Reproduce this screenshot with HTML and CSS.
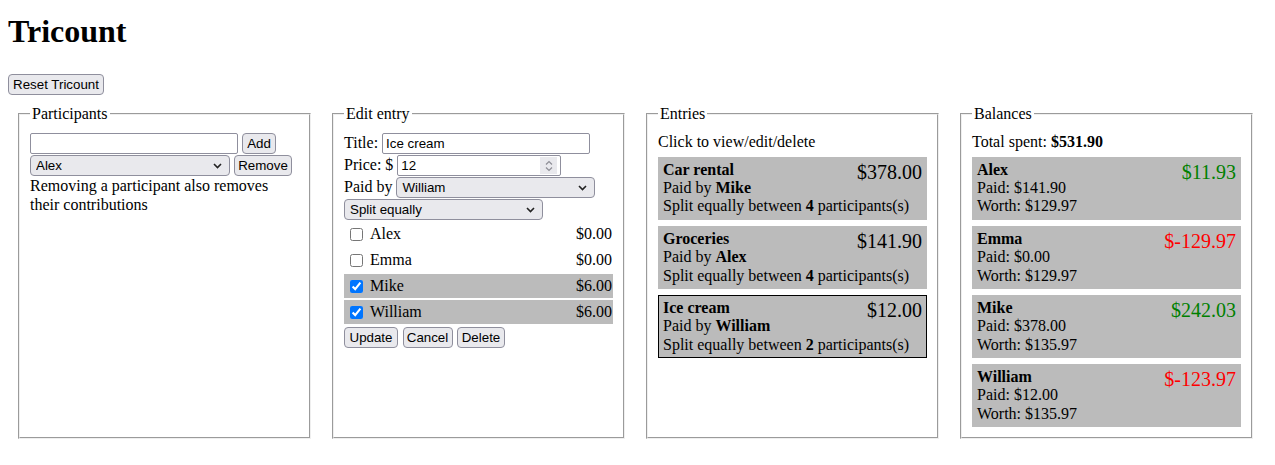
FILE: index.html
```html
<!DOCTYPE html>
<html lang="en">
<head>
<meta charset="utf-8">
<title>Tricount</title>
<link rel="stylesheet" href="styles.css">
</head>
<body>
<h1 class="title">Tricount</h1>
<div class="toolbar"><button class="btn btn-reset">Reset Tricount</button></div>
<div class="panels">
  <fieldset class="panel">
    <legend>Participants</legend>
    <div class="row">
      <input class="ctrl field name-input" type="text">
      <button class="btn btn-add">Add</button>
    </div>
    <div class="row">
      <select class="ctrl dropdown participant-select"><option>Alex</option><option>Emma</option><option>Mike</option><option>William</option></select>
      <button class="btn btn-remove">Remove</button>
    </div>
    <p class="note">Removing a participant also removes their contributions</p>
  </fieldset>

  <fieldset class="panel">
    <legend>Edit entry</legend>
    <div class="row">
      <span>Title:</span>
      <input class="ctrl field title-input" type="text" value="Ice cream">
    </div>
    <div class="row">
      <span>Price: $</span>
      <span class="num-wrap">
        <input class="ctrl field price-input" type="number" value="12">
        <span class="spinner" aria-hidden="true">
          <svg width="10" height="14" viewBox="0 0 10 14"><path d="M2 5.5 L5 2.5 L8 5.5" fill="none" stroke="#8e8e96" stroke-width="1.2"/><path d="M2 8.5 L5 11.5 L8 8.5" fill="none" stroke="#8e8e96" stroke-width="1.2"/></svg>
        </span>
      </span>
    </div>
    <div class="row">
      <span>Paid by</span>
      <select class="ctrl dropdown payer-select"><option>Alex</option><option>Emma</option><option>Mike</option><option selected>William</option></select>
    </div>
    <div class="row">
      <select class="ctrl dropdown split-select"><option>Split equally</option></select>
    </div>
    <div class="shares">
      <label class="share"><input type="checkbox" class="chk"><span class="share-name">Alex</span><span class="share-amt">$0.00</span></label>
      <label class="share"><input type="checkbox" class="chk"><span class="share-name">Emma</span><span class="share-amt">$0.00</span></label>
      <label class="share share-on"><input type="checkbox" class="chk" checked><span class="share-name">Mike</span><span class="share-amt">$6.00</span></label>
      <label class="share share-on"><input type="checkbox" class="chk" checked><span class="share-name">William</span><span class="share-amt">$6.00</span></label>
    </div>
    <div class="actions">
      <button class="btn btn-update">Update</button>
      <button class="btn btn-cancel">Cancel</button>
      <button class="btn btn-delete">Delete</button>
    </div>
  </fieldset>

  <fieldset class="panel">
    <legend>Entries</legend>
    <p class="lead">Click to view/edit/delete</p>
    <div class="card">
      <span class="amount">$378.00</span>
      <b>Car rental</b><br>
      Paid by <b>Mike</b><br>
      Split equally between <b>4</b> participants(s)
    </div>
    <div class="card">
      <span class="amount">$141.90</span>
      <b>Groceries</b><br>
      Paid by <b>Alex</b><br>
      Split equally between <b>4</b> participants(s)
    </div>
    <div class="card card-selected">
      <span class="amount">$12.00</span>
      <b>Ice cream</b><br>
      Paid by <b>William</b><br>
      Split equally between <b>2</b> participants(s)
    </div>
  </fieldset>

  <fieldset class="panel">
    <legend>Balances</legend>
    <p class="lead">Total spent: <b>$531.90</b></p>
    <div class="card">
      <span class="amount pos">$11.93</span>
      <b>Alex</b><br>
      Paid: $141.90<br>
      Worth: $129.97
    </div>
    <div class="card">
      <span class="amount neg">$-129.97</span>
      <b>Emma</b><br>
      Paid: $0.00<br>
      Worth: $129.97
    </div>
    <div class="card">
      <span class="amount pos">$242.03</span>
      <b>Mike</b><br>
      Paid: $378.00<br>
      Worth: $135.97
    </div>
    <div class="card">
      <span class="amount neg">$-123.97</span>
      <b>William</b><br>
      Paid: $12.00<br>
      Worth: $135.97
    </div>
  </fieldset>
</div>
</body>
</html>
```
FILE: styles.css
```css
body {
  margin: 0 8px 8px;
  font-family: "Liberation Serif", "Times New Roman", serif;
  font-size: 16px;
  line-height: 1.15;
  color: #000;
  background: #fff;
}

.title {
  font-size: 32px;
  line-height: 36.8px;
  font-weight: bold;
  margin: 13px 0 24px;
}

.btn,
.ctrl {
  font-family: "Liberation Sans", Arial, sans-serif;
  font-size: 13.333px;
  color: #000;
  box-sizing: border-box;
  height: 21px;
  margin: 0;
}

.btn {
  padding: 0;
  text-align: center;
  background: #e9e9ed;
  border: 1px solid #8f8f9d;
  border-radius: 4px;
}

.btn-reset { width: 96px; }
.btn-add { width: 34px; }
.btn-remove { width: 58px; }
.btn-update { width: 54px; }
.btn-cancel { width: 50px; }
.btn-delete { width: 48px; }

.field {
  background: #fff;
  border: 1px solid #8f8f9d;
  border-radius: 2px;
  padding: 0 3px;
  outline: none;
}

.dropdown {
  -webkit-appearance: none;
  appearance: none;
  background-color: #e9e9ed;
  background-image: url("data:image/svg+xml,%3Csvg xmlns='http://www.w3.org/2000/svg' width='9' height='6' viewBox='0 0 9 6'%3E%3Cpath d='M1 1 L4.5 4.5 L8 1' fill='none' stroke='%23222' stroke-width='1.6'/%3E%3C/svg%3E");
  background-repeat: no-repeat;
  background-position: right 7px center;
  border: 1px solid #8f8f9d;
  border-radius: 4px;
  padding: 0 22px 0 5px;
}

.toolbar {
  display: flex;
}

.panels {
  display: flex;
  align-items: stretch;
  gap: 21px;
  margin: 10px 0 0 10px;
}

.panel {
  width: 269px;
  margin: 0;
  padding: 10px;
  flex: 0 0 auto;
}

.panel legend {
  padding: 0 2px;
}

.row {
  display: flex;
  align-items: center;
  gap: 4px;
  margin-bottom: 1px;
}

.name-input { width: 208px; }
.participant-select { width: 200px; }
.title-input { width: 208px; }
.price-input { width: 164px; }
.payer-select { width: 199px; }
.split-select { width: 199px; }

.num-wrap {
  position: relative;
  display: flex;
}

.price-input::-webkit-inner-spin-button,
.price-input::-webkit-outer-spin-button {
  -webkit-appearance: none;
  margin: 0;
}

.spinner {
  position: absolute;
  top: 2px;
  right: 4px;
  width: 17px;
  height: 17px;
  background: #e9e9ed;
  display: flex;
  align-items: center;
  justify-content: center;
  pointer-events: none;
}

.note {
  margin: 0;
}

.shares {
  display: flex;
  flex-direction: column;
  gap: 2px;
  margin-top: 2px;
}

.share {
  display: flex;
  align-items: center;
  height: 24px;
  padding: 0 1px 0 2px;
}

.share-on {
  background: #bbbbbb;
}

.chk {
  margin: 0 7px 0 4px;
  width: 13px;
  height: 13px;
}

.share-name {
  flex: 1;
}

.actions {
  display: flex;
  gap: 4.5px;
  margin-top: 3px;
}

.lead {
  margin: 0 0 5px;
}

.card {
  background: #bbbbbb;
  border: 1px solid transparent;
  padding: 3px 4px;
  margin-bottom: 6px;
}

.card:last-child {
  margin-bottom: 0;
}

.card-selected {
  border-color: #000;
}

.amount {
  float: right;
  font-size: 20px;
}

.pos { color: green; }
.neg { color: red; }
```
